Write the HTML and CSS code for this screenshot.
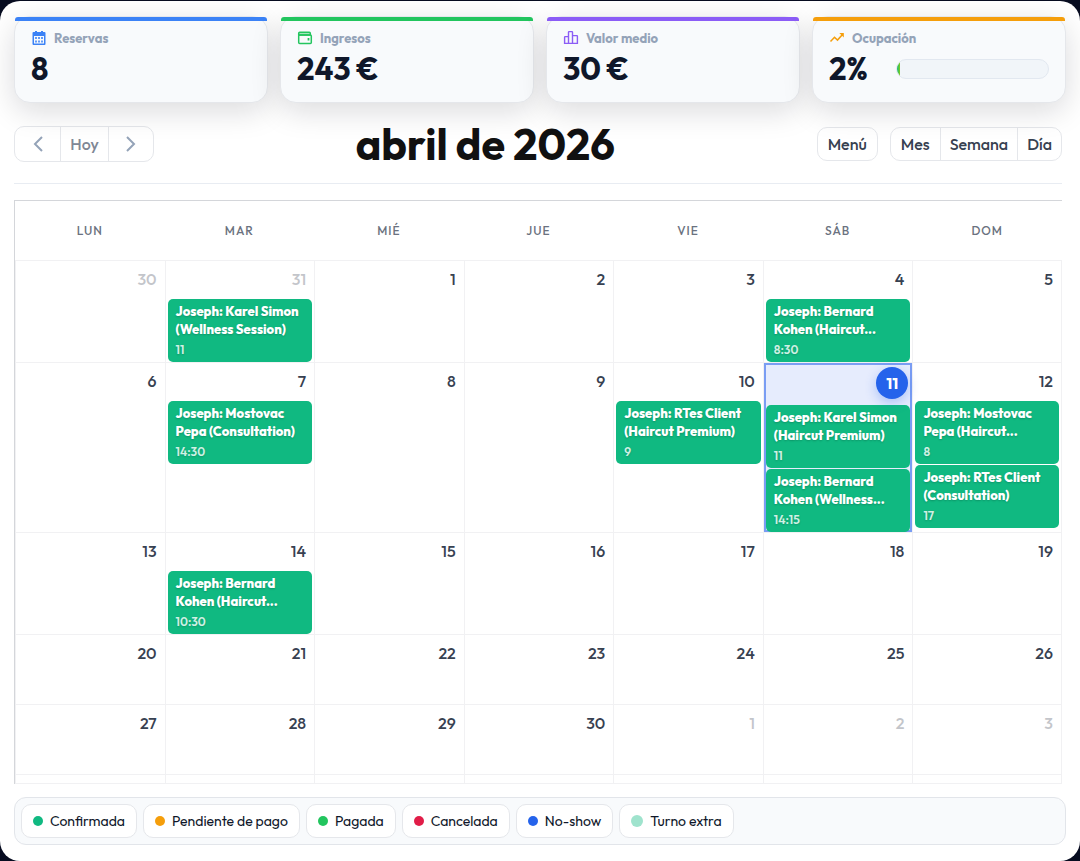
FILE: index.html
```html
<!DOCTYPE html>
<html lang="es">
<head>
  <meta charset="UTF-8">
  <meta name="viewport" content="width=device-width, initial-scale=1.0">
  <title>Calendario</title>
  <link rel="stylesheet" href="styles.css">
</head>
<body>
  <main class="panel">
    <section class="stats">
      <div class="stat blue">
        <h2 class="stat-label">
          <svg width="16" height="16" viewBox="0 0 16 16"><path fill="currentColor" d="M4 1h2v1h4V1h2v1h1.500q1 0 1 1v11q0 1-1 1h-11q-1 0-1-1V3q0-1 1-1H4z"/><path fill="#f8fafc" d="M3 6h10v7.500H3z"/><path fill="currentColor" fill-opacity=".8" d="M4 7h2v2H4zM7 7h2v2H7zM10 7h2v2h-2zM4 10.500h2v2H4zM7 10.500h2v2H7zM10 10.500h2v2h-2z"/></svg>
          <span>Reservas</span>
        </h2>
        <p class="stat-value">8</p>
      </div>
      <div class="stat green">
        <h2 class="stat-label">
          <svg width="16" height="16" viewBox="0 0 16 16" fill="none" stroke="currentColor" stroke-width="1.500"><path fill="currentColor" fill-opacity=".4" d="M1.700 5V3.300q0-1 1-1h9.600q1 0 1 1V5z"/><rect x="1.700" y="5" width="12.600" height="8.500" rx="1"/><path stroke-width="1.800" d="M11.500 8v2.500"/></svg>
          <span>Ingresos</span>
        </h2>
        <p class="stat-value">243 €</p>
      </div>
      <div class="stat purple">
        <h2 class="stat-label">
          <svg width="16" height="16" viewBox="0 0 16 16" fill="none" stroke="currentColor" stroke-width="1.400"><path d="M1.600 13.400V7.200q0-.6.6-.6h3.300v6.800zM5.500 13.400V2.200q0-.6.6-.6h2.800q.6 0 .6.600v11.200zM9.500 5.600h4.300q.6 0 .6.600v7.200H9.500z"/></svg>
          <span>Valor medio</span>
        </h2>
        <p class="stat-value">30 €</p>
      </div>
      <div class="stat orange">
        <h2 class="stat-label">
          <svg width="16" height="16" viewBox="0 0 16 16" fill="none" stroke="currentColor" stroke-width="1.500"><path d="M1.500 11.500L5.500 7.200l3 2.900 5-5.600"/><path fill="currentColor" stroke="none" d="M10.300 3h4.500v4.500z"/></svg>
          <span>Ocupación</span>
        </h2>
        <div class="stat-row">
          <p class="stat-value">2%</p>
          <div class="bar" role="progressbar" aria-label="Ocupación" aria-valuenow="2"><div class="bar-fill" style="width: 2%"></div></div>
        </div>
      </div>
    </section>

    <header class="toolbar">
      <div class="btn-group nav">
        <button type="button" aria-label="Anterior"><svg width="12" height="16" viewBox="0 0 12 16"><path d="M10 1L3 8l7 7"/></svg></button>
        <button type="button" class="today-btn">Hoy</button>
        <button type="button" aria-label="Siguiente"><svg width="12" height="16" viewBox="0 0 12 16"><path d="M2 1l7 7-7 7"/></svg></button>
      </div>
      <h1 class="title">abril de 2026</h1>
      <div class="views">
        <div class="btn-group"><button type="button">Menú</button></div>
        <div class="btn-group">
          <button type="button">Mes</button>
          <button type="button">Semana</button>
          <button type="button">Día</button>
        </div>
      </div>
    </header>

    <table class="calendar">
      <thead>
        <tr><th>LUN</th><th>MAR</th><th>MIÉ</th><th>JUE</th><th>VIE</th><th>SÁB</th><th>DOM</th></tr>
      </thead>
      <tbody>
        <tr>
          <td class="other"><a class="day">30</a></td>
          <td class="other"><a class="day">31</a>
            <a class="event"><b>Joseph: Karel Simon<br>(Wellness Session)</b><time>11</time></a>
          </td>
          <td><a class="day">1</a></td>
          <td><a class="day">2</a></td>
          <td><a class="day">3</a></td>
          <td><a class="day">4</a>
            <a class="event"><b>Joseph: Bernard<br>Kohen (Haircut...</b><time>8:30</time></a>
          </td>
          <td><a class="day">5</a></td>
        </tr>
        <tr>
          <td><a class="day">6</a></td>
          <td><a class="day">7</a>
            <a class="event"><b>Joseph: Mostovac<br>Pepa (Consultation)</b><time>14:30</time></a>
          </td>
          <td><a class="day">8</a></td>
          <td><a class="day">9</a></td>
          <td><a class="day">10</a>
            <a class="event"><b>Joseph: RTes Client<br>(Haircut Premium)</b><time>9</time></a>
          </td>
          <td class="today"><a class="day"><span>11</span></a>
            <a class="event"><b>Joseph: Karel Simon<br>(Haircut Premium)</b><time>11</time></a>
            <a class="event"><b>Joseph: Bernard<br>Kohen (Wellness...</b><time>14:15</time></a>
          </td>
          <td><a class="day">12</a>
            <a class="event"><b>Joseph: Mostovac<br>Pepa (Haircut...</b><time>8</time></a>
            <a class="event"><b>Joseph: RTes Client<br>(Consultation)</b><time>17</time></a>
          </td>
        </tr>
        <tr>
          <td><a class="day">13</a></td>
          <td><a class="day">14</a>
            <a class="event"><b>Joseph: Bernard<br>Kohen (Haircut...</b><time>10:30</time></a>
          </td>
          <td><a class="day">15</a></td>
          <td><a class="day">16</a></td>
          <td><a class="day">17</a></td>
          <td><a class="day">18</a></td>
          <td><a class="day">19</a></td>
        </tr>
        <tr>
          <td><a class="day">20</a></td>
          <td><a class="day">21</a></td>
          <td><a class="day">22</a></td>
          <td><a class="day">23</a></td>
          <td><a class="day">24</a></td>
          <td><a class="day">25</a></td>
          <td><a class="day">26</a></td>
        </tr>
        <tr>
          <td><a class="day">27</a></td>
          <td><a class="day">28</a></td>
          <td><a class="day">29</a></td>
          <td><a class="day">30</a></td>
          <td class="other"><a class="day">1</a></td>
          <td class="other"><a class="day">2</a></td>
          <td class="other"><a class="day">3</a></td>
        </tr>
        <tr class="spacer"><td></td><td></td><td></td><td></td><td></td><td></td><td></td></tr>
      </tbody>
    </table>

    <ul class="legend">
      <li><i class="dot confirmed"></i>Confirmada</li>
      <li><i class="dot pending"></i>Pendiente de pago</li>
      <li><i class="dot paid"></i>Pagada</li>
      <li><i class="dot cancelled"></i>Cancelada</li>
      <li><i class="dot noshow"></i>No-show</li>
      <li><i class="dot extra"></i>Turno extra</li>
    </ul>
  </main>
</body>
</html>
```
FILE: styles.css
```css
* {
  margin: 0;
  padding: 0;
  box-sizing: border-box;
}
body {
  background: #070c20;
  padding-top: 1px;
  font-family: Outfit, Lato, "Liberation Sans", sans-serif;
  color: #0f172a;
}
.panel {
  background: #fff;
  border-radius: 20px;
  padding: 15px 14px 16px;
}

/* stats */
.stats {
  display: grid;
  grid-template-columns: repeat(4, 1fr);
  gap: 12px;
}
.stat {
  position: relative;
  height: 87px;
  padding: 12px 16px;
  background: #f8fafc;
  border: 1px solid #e5e7eb;
  border-radius: 16px;
  box-shadow: 0 8px 30px rgba(15, 15, 30, .15);
}
.stat::before {
  content: "";
  position: absolute;
  top: 0;
  left: 0;
  right: 0;
  height: 4px;
  border-radius: 3px 3px 0 0;
  background: currentColor;
}
.blue { color: #3b82f6; }
.green { color: #22c55e; }
.purple { color: #8b5cf6; }
.orange { color: #f59e0b; }
.stat-label {
  display: flex;
  align-items: center;
  gap: 7px;
  font-size: 13px;
  font-weight: 700;
  line-height: 18px;
}
.stat-label span {
  color: #94a3b8;
}
.stat-value {
  font-size: 31px;
  font-weight: 700;
  line-height: 44px;
  color: #0f172a;
}
.stat-row {
  display: flex;
  align-items: center;
  gap: 28px;
}
.bar {
  flex: 1;
  height: 20px;
  background: #f1f5f9;
  border: 1px solid #e2e8f0;
  border-radius: 10px;
  overflow: hidden;
}
.bar-fill {
  height: 100%;
  background: linear-gradient(90deg, #10b981, #84cc16);
}

/* toolbar */
.toolbar {
  display: flex;
  justify-content: space-between;
  align-items: center;
  height: 81px;
  margin-right: 4px;
  padding-top: 2px;
  border-bottom: 1px solid #e8ecf2;
}
.btn-group {
  display: flex;
  height: 34px;
  border: 1px solid #e5e7eb;
  border-radius: 10px;
  overflow: hidden;
}
.btn-group button {
  padding: 0 10px;
  border: 0;
  background: none;
  font-family: inherit;
  font-size: 16px;
  font-weight: 500;
  color: #374151;
}
.btn-group button + button {
  padding: 0 9px;
  border-left: 1px solid #e5e7eb;
}
.nav {
  height: 36px;
}
.nav button {
  width: 45px;
}
.nav .today-btn {
  width: 48px;
  color: #808795;
}
.nav svg {
  display: block;
  margin: 0 auto;
  fill: none;
  stroke: #94a3b8;
  stroke-width: 2;
}
.title {
  font-size: 43px;
  font-weight: 700;
  line-height: 52px;
  color: #111;
}
.views {
  display: flex;
  gap: 12px;
}

/* calendar */
.calendar {
  width: calc(100% - 4px);
  margin-top: 16px;
  table-layout: fixed;
  border-collapse: separate;
  border-spacing: 0;
  border-top: 1px solid #d4d6da;
  border-left: 1px solid #d4d6da;
}
.calendar th {
  height: 60px;
  border-bottom: 1px solid #f1f1f3;
  font-size: 12px;
  font-weight: 500;
  letter-spacing: 1px;
  color: #6b7280;
}
.calendar td {
  height: 70px;
  vertical-align: top;
  border-left: 1px solid #f1f1f3;
  border-bottom: 1px solid #f1f1f3;
}
.calendar td:last-child {
  border-right: 1px solid #f1f1f3;
}
.calendar .spacer td {
  height: 9px;
}
.day {
  display: block;
  height: 38px;
  padding: 0 8px;
  font-size: 16px;
  font-weight: 500;
  line-height: 36px;
  text-align: right;
  color: #374151;
}
.other .day {
  color: #c3c5ca;
}
.event {
  display: block;
  height: 63px;
  margin: 0 2px;
  padding: 3px 8px 0;
  border-radius: 5px;
  background: #10b981;
  color: #fff;
  text-shadow: 0 1px 2px rgba(0, 0, 0, .2);
  white-space: nowrap;
}
.event + .event {
  margin-top: 1px;
}
.event b {
  display: block;
  font-size: 13px;
  font-weight: 800;
  line-height: 18px;
}
.event time {
  display: block;
  margin-top: 3px;
  font-size: 12px;
  font-weight: 600;
  line-height: 18px;
  opacity: .8;
}
.calendar .today {
  background: #e6ecfd;
  box-shadow: inset 0 0 0 2px #7a9df3;
}
.today .day {
  display: flex;
  justify-content: flex-end;
  height: 42px;
  padding: 4px 4px 0;
}
.today .day span {
  width: 32px;
  height: 32px;
  border-radius: 50%;
  background: #2563eb;
  box-shadow: 0 4px 12px rgba(37, 99, 235, .3);
  color: #fff;
  font-weight: 700;
  line-height: 32px;
  text-align: center;
}

/* legend */
.legend {
  display: flex;
  flex-wrap: wrap;
  gap: 6px;
  margin-top: 13px;
  padding: 6px;
  list-style: none;
  background: #f8fafc;
  border: 1px solid #e2e5ea;
  border-radius: 12px;
}
.legend li {
  display: flex;
  align-items: center;
  gap: 7px;
  height: 34px;
  padding: 0 11px;
  background: #fff;
  border: 1px solid #e5e7eb;
  border-radius: 10px;
  font-size: 14px;
}
.dot {
  width: 10px;
  height: 10px;
  border-radius: 50%;
}
.confirmed { background: #10b981; }
.pending { background: #f59e0b; }
.paid { background: #22c55e; }
.cancelled { background: #e11d48; }
.noshow { background: #2563eb; }
.extra {
  width: 12px;
  height: 12px;
  background: #9fe3cd;
}
```
